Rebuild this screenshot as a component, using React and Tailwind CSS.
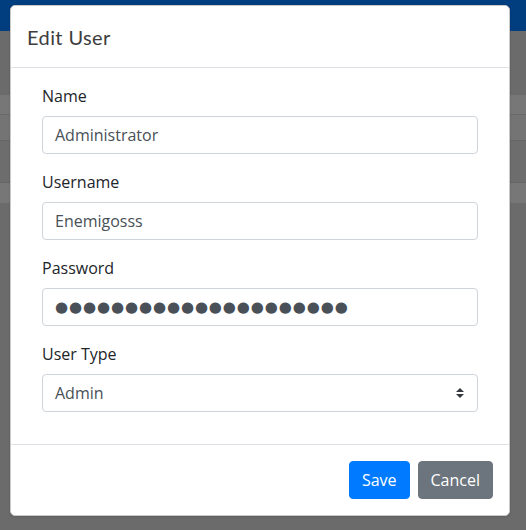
import React from "react";

function Field({ label, children }) {
  return (
    <div className="mb-4">
      <label className="block mb-2 leading-6 text-[16px] text-[#212529]">{label}</label>
      {children}
    </div>
  );
}

const inputCls =
  "h-[38px] w-full rounded border border-[#ced4da] bg-white px-3 flex items-center text-[16px] text-[#495057]";

export default function App() {
  return (
    <div className="relative w-[526px] h-[530px] overflow-hidden bg-[#6b6b6b]" style={{ fontFamily: '"Open Sans", sans-serif' }}>
      {/* dimmed page behind */}
      <div className="h-[31px] bg-[#003e80]" />
      <div className="h-[64px] bg-[#6b6b6b]" />
      <div className="h-[20px] bg-[#777777] border-b border-[#6a6a6a]" />
      <div className="h-[26px] bg-[#747474] border-b border-[#666666]" />
      <div className="h-[42px] bg-[#6d6d6d] border-b border-[#666666]" />
      <div className="h-[20px] bg-[#777777]" />

      {/* modal */}
      <div className="absolute left-[10px] top-[5px] w-[500px] bg-white rounded-[5px] border border-[#c8c8c8] shadow-sm">
        <div className="h-[62px] px-4 flex items-center border-b border-[#dee2e6]">
          <h5 className="text-[20px] text-[#3d3d3d] leading-[30px] tracking-[0.4px]" style={{ fontFamily: 'Lato, sans-serif' }}>Edit User</h5>
        </div>
        <div className="pt-4 pb-4 pl-[31px] pr-[31px]">
          <Field label="Name">
            <div className={inputCls}>Administrator</div>
          </Field>
          <Field label="Username">
            <div className={inputCls}>Enemigosss</div>
          </Field>
          <Field label="Password">
            <div className={inputCls}>
              <span className="text-[#495057] text-[15px] tracking-[0.9px]" style={{ fontFamily: '"DejaVu Sans", sans-serif' }}>
                ●●●●●●●●●●●●●●●●●●●●●
              </span>
            </div>
          </Field>
          <Field label="User Type">
            <div className={inputCls + " justify-between"}>
              <span>Admin</span>
              <svg width="8" height="10" viewBox="0 0 4 5" className="mr-[1px]">
                <path d="M2 0L0 2h4zm0 5L0 3h4z" fill="#343a40" />
              </svg>
            </div>
          </Field>
        </div>
        <div className="border-t border-[#dee2e6] p-4 flex justify-end gap-2">
          <button className="h-[38px] px-3 rounded bg-[#007bff] text-white text-[16px] border border-[#007bff]">Save</button>
          <button className="h-[38px] px-3 rounded bg-[#6c757d] text-white text-[16px] border border-[#6c757d]">Cancel</button>
        </div>
      </div>
    </div>
  );
}
